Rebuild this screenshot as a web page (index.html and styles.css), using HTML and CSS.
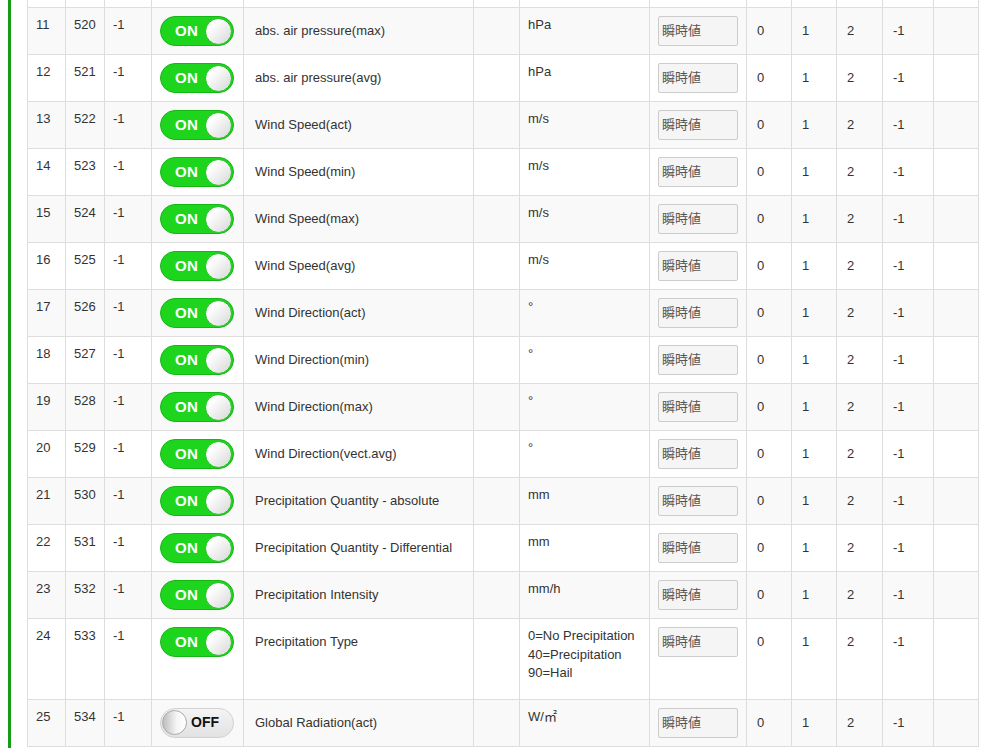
FILE: index.html
```html
<!DOCTYPE html>
<html lang="ja">
<head>
    <meta charset="UTF-8">
    <title>Channel Settings</title>
    <link rel="stylesheet" href="styles.css">
</head>
<body>
<div class="page">
    <table class="channels">
        <colgroup>
            <col style="width:38px"><col style="width:39px"><col style="width:47px"><col style="width:92px">
            <col style="width:230px"><col style="width:46px"><col style="width:130px"><col style="width:97px">
            <col style="width:45px"><col style="width:45px"><col style="width:46px"><col style="width:51px"><col style="width:45px">
        </colgroup>
        <tbody>
            <tr class="cut">
                <td></td><td></td><td></td><td></td><td></td><td></td><td></td><td></td><td></td><td></td><td></td><td></td><td></td>
            </tr>
            <tr>
                <td>11</td><td>520</td><td>-1</td>
                <td><span class="switch on"><b>ON</b><i></i></span></td>
                <td class="name">abs. air pressure(max)</td><td></td><td>hPa</td>
                <td><input class="mode" type="text" value="瞬時値" readonly></td>
                <td class="val">0</td><td class="val">1</td><td class="val">2</td><td class="val">-1</td><td></td>
            </tr>
            <tr>
                <td>12</td><td>521</td><td>-1</td>
                <td><span class="switch on"><b>ON</b><i></i></span></td>
                <td class="name">abs. air pressure(avg)</td><td></td><td>hPa</td>
                <td><input class="mode" type="text" value="瞬時値" readonly></td>
                <td class="val">0</td><td class="val">1</td><td class="val">2</td><td class="val">-1</td><td></td>
            </tr>
            <tr>
                <td>13</td><td>522</td><td>-1</td>
                <td><span class="switch on"><b>ON</b><i></i></span></td>
                <td class="name">Wind Speed(act)</td><td></td><td>m/s</td>
                <td><input class="mode" type="text" value="瞬時値" readonly></td>
                <td class="val">0</td><td class="val">1</td><td class="val">2</td><td class="val">-1</td><td></td>
            </tr>
            <tr>
                <td>14</td><td>523</td><td>-1</td>
                <td><span class="switch on"><b>ON</b><i></i></span></td>
                <td class="name">Wind Speed(min)</td><td></td><td>m/s</td>
                <td><input class="mode" type="text" value="瞬時値" readonly></td>
                <td class="val">0</td><td class="val">1</td><td class="val">2</td><td class="val">-1</td><td></td>
            </tr>
            <tr>
                <td>15</td><td>524</td><td>-1</td>
                <td><span class="switch on"><b>ON</b><i></i></span></td>
                <td class="name">Wind Speed(max)</td><td></td><td>m/s</td>
                <td><input class="mode" type="text" value="瞬時値" readonly></td>
                <td class="val">0</td><td class="val">1</td><td class="val">2</td><td class="val">-1</td><td></td>
            </tr>
            <tr>
                <td>16</td><td>525</td><td>-1</td>
                <td><span class="switch on"><b>ON</b><i></i></span></td>
                <td class="name">Wind Speed(avg)</td><td></td><td>m/s</td>
                <td><input class="mode" type="text" value="瞬時値" readonly></td>
                <td class="val">0</td><td class="val">1</td><td class="val">2</td><td class="val">-1</td><td></td>
            </tr>
            <tr>
                <td>17</td><td>526</td><td>-1</td>
                <td><span class="switch on"><b>ON</b><i></i></span></td>
                <td class="name">Wind Direction(act)</td><td></td><td>°</td>
                <td><input class="mode" type="text" value="瞬時値" readonly></td>
                <td class="val">0</td><td class="val">1</td><td class="val">2</td><td class="val">-1</td><td></td>
            </tr>
            <tr>
                <td>18</td><td>527</td><td>-1</td>
                <td><span class="switch on"><b>ON</b><i></i></span></td>
                <td class="name">Wind Direction(min)</td><td></td><td>°</td>
                <td><input class="mode" type="text" value="瞬時値" readonly></td>
                <td class="val">0</td><td class="val">1</td><td class="val">2</td><td class="val">-1</td><td></td>
            </tr>
            <tr>
                <td>19</td><td>528</td><td>-1</td>
                <td><span class="switch on"><b>ON</b><i></i></span></td>
                <td class="name">Wind Direction(max)</td><td></td><td>°</td>
                <td><input class="mode" type="text" value="瞬時値" readonly></td>
                <td class="val">0</td><td class="val">1</td><td class="val">2</td><td class="val">-1</td><td></td>
            </tr>
            <tr>
                <td>20</td><td>529</td><td>-1</td>
                <td><span class="switch on"><b>ON</b><i></i></span></td>
                <td class="name">Wind Direction(vect.avg)</td><td></td><td>°</td>
                <td><input class="mode" type="text" value="瞬時値" readonly></td>
                <td class="val">0</td><td class="val">1</td><td class="val">2</td><td class="val">-1</td><td></td>
            </tr>
            <tr>
                <td>21</td><td>530</td><td>-1</td>
                <td><span class="switch on"><b>ON</b><i></i></span></td>
                <td class="name">Precipitation Quantity - absolute</td><td></td><td>mm</td>
                <td><input class="mode" type="text" value="瞬時値" readonly></td>
                <td class="val">0</td><td class="val">1</td><td class="val">2</td><td class="val">-1</td><td></td>
            </tr>
            <tr>
                <td>22</td><td>531</td><td>-1</td>
                <td><span class="switch on"><b>ON</b><i></i></span></td>
                <td class="name">Precipitation Quantity - Differential</td><td></td><td>mm</td>
                <td><input class="mode" type="text" value="瞬時値" readonly></td>
                <td class="val">0</td><td class="val">1</td><td class="val">2</td><td class="val">-1</td><td></td>
            </tr>
            <tr>
                <td>23</td><td>532</td><td>-1</td>
                <td><span class="switch on"><b>ON</b><i></i></span></td>
                <td class="name">Precipitation Intensity</td><td></td><td>mm/h</td>
                <td><input class="mode" type="text" value="瞬時値" readonly></td>
                <td class="val">0</td><td class="val">1</td><td class="val">2</td><td class="val">-1</td><td></td>
            </tr>
            <tr>
                <td>24</td><td>533</td><td>-1</td>
                <td><span class="switch on"><b>ON</b><i></i></span></td>
                <td class="name">Precipitation Type</td><td></td>
                <td><div class="unit-list">0=No Precipitation<br>40=Precipitation<br>90=Hail</div></td>
                <td><input class="mode" type="text" value="瞬時値" readonly></td>
                <td class="val">0</td><td class="val">1</td><td class="val">2</td><td class="val">-1</td><td></td>
            </tr>
            <tr>
                <td>25</td><td>534</td><td>-1</td>
                <td><span class="switch off"><i></i><b>OFF</b></span></td>
                <td class="name">Global Radiation(act)</td><td></td><td>W/㎡</td>
                <td><input class="mode" type="text" value="瞬時値" readonly></td>
                <td class="val">0</td><td class="val">1</td><td class="val">2</td><td class="val">-1</td><td></td>
            </tr>
        </tbody>
    </table>
</div>
</body>
</html>
```

FILE: styles.css
```css
html, body { margin: 0; padding: 0; background: #fff; }
body { font-family: "Liberation Sans", Arial, "Noto Sans CJK JP", sans-serif; font-size: 13px; line-height: 1.42857; color: #333; }
.page { margin-left: 8px; border-left: 3px solid #169c16; padding-left: 16px; height: 748px; overflow: hidden; }

.channels { border-collapse: collapse; table-layout: fixed; width: 952px; }
.channels td { border: 1px solid #ddd; padding: 8px; vertical-align: top; white-space: nowrap; }
.channels tbody tr:nth-child(even) { background: #f9f9f9; }
.channels tr.cut td { border-top: 0; padding: 0; height: 7px; }

.name { padding-left: 11px !important; line-height: 30px; }
.val { padding-left: 10px !important; line-height: 30px; }
.unit-list { padding-bottom: 8px; }

.switch { display: flex; align-items: center; justify-content: space-between; box-sizing: border-box; width: 74px; height: 30px; border-radius: 15px; }
.switch b { font-size: 15px; font-weight: bold; letter-spacing: 0.3px; }
.switch i { display: block; box-sizing: border-box; width: 27px; height: 27px; border-radius: 50%; background: linear-gradient(135deg, #fff 25%, #dcdcdc 90%); }
.switch.on { background: #1ed51e; border: 1px solid #14b814; padding: 0 1px 0 14px; }
.switch.on b { color: #fff; }
.switch.on i { border: 1px solid #19c019; }
.switch.off { background: linear-gradient(#f4f4f4, #e2e2e2); border: 1px solid #d2d2d2; padding: 0 14px 0 1px; }
.switch.off b { color: #111; font-size: 14px; letter-spacing: 0; }
.switch.off i { width: 25px; height: 25px; border: 1px solid #aaa; background: linear-gradient(90deg, #bdbdbd, #f6f6f6 60%, #fff); }

.mode { display: block; box-sizing: border-box; width: 80px; height: 30px; margin: 0; padding: 0 3px 3px; border: 1px solid #ccc; border-radius: 2px; background: #f5f5f5; color: #555; font-family: "Liberation Sans", "Noto Sans CJK JP", sans-serif; font-size: 13px; outline: none; }
```
